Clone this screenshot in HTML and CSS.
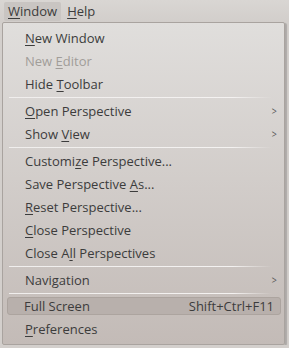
FILE: index.html
```html
<!DOCTYPE html>
<html>
<head>
    <title>Window Menu</title>
    <link rel="stylesheet" href="styles.css">
</head>
<body>
    <div class="menubar">
        <span class="top-item active"><u>W</u>indow</span>
        <span class="top-item"><u>H</u>elp</span>
    </div>
    <div class="menu">
        <div class="item"><span><u>N</u>ew Window</span></div>
        <div class="item disabled"><span>New <u>E</u>ditor</span></div>
        <div class="item"><span>Hide <u>T</u>oolbar</span></div>
        <div class="sep"></div>
        <div class="item"><span><u>O</u>pen Perspective</span><span class="arrow">&gt;</span></div>
        <div class="item"><span>Show <u>V</u>iew</span><span class="arrow">&gt;</span></div>
        <div class="sep"></div>
        <div class="item"><span>Customi<u>z</u>e Perspective...</span></div>
        <div class="item"><span>Save Perspective <u>A</u>s...</span></div>
        <div class="item"><span><u>R</u>eset Perspective...</span></div>
        <div class="item"><span><u>C</u>lose Perspective</span></div>
        <div class="item"><span>Close A<u>l</u>l Perspectives</span></div>
        <div class="sep"></div>
        <div class="item"><span>Navi<u>g</u>ation</span><span class="arrow">&gt;</span></div>
        <div class="sep"></div>
        <div class="item hover"><span>Full Screen</span><span class="key">Shift+Ctrl+F11</span></div>
        <div class="item"><span><u>P</u>references</span></div>
    </div>
</body>
</html>
```

FILE: styles.css
```css
body {
    margin: 0;
    background: #d3cfcc;
    font-family: "Open Sans", "DejaVu Sans", sans-serif;
    font-size: 13px;
    color: #3c3c3c;
}

u {
    text-decoration-thickness: 1px;
    text-underline-offset: 2px;
}

.menubar {
    height: 22px;
    display: flex;
    align-items: center;
    gap: 2px;
    padding-left: 4px;
    background: linear-gradient(#d9d6d3, #d2cecb);
}

.top-item {
    padding: 1px 4px 1px 4px;
    line-height: 17px;
}

.top-item.active {
    background: #c9c5c2;
    border-radius: 2px;
}

.menu {
    width: 281px;
    margin-left: 2px;
    padding: 3px 0 4px 0;
    background: linear-gradient(#e0dedc, #c3bbb7);
    border: 1px solid #a9a39f;
    border-radius: 2px;
    box-shadow: 2px 1px 1px rgba(0, 0, 0, 0.18);
}

.item {
    height: 23px;
    display: flex;
    align-items: center;
    justify-content: space-between;
    padding: 0 4px 0 19px;
    margin: 0 3px;
}

.item.disabled {
    color: #a19d99;
}

.item.hover {
    background: #b8b0ac;
    border: 1px solid #aca49f;
    border-radius: 3px;
    height: 16px;
    margin: 3px 3px 2px 4px;
    padding: 0 6px 0 16px;
}

.arrow {
    font-size: 11px;
    color: #555;
    transform: scaleX(0.8);
}

.key {
    color: #3c3c3c;
}

.sep {
    height: 1px;
    margin: 2px 12px 1px 6px;
    background: linear-gradient(90deg, #f0eeed 0%, #f4f2f1 85%, rgba(244, 242, 241, 0));
}
```
